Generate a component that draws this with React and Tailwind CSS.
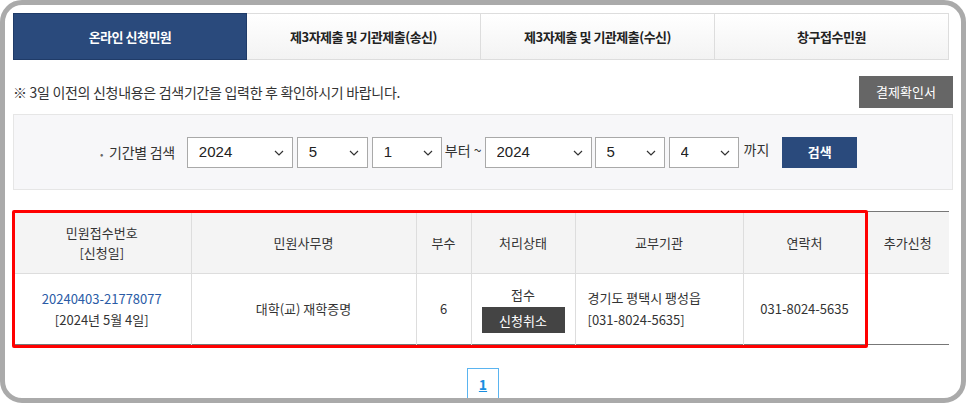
import React, { useState } from 'react'

const tabs = ['온라인 신청민원', '제3자제출 및 기관제출(송신)', '제3자제출 및 기관제출(수신)', '창구접수민원']

function Chevron(){
  return (
    <svg width="10" height="6" viewBox="0 0 10 6" className="pointer-events-none absolute right-[9px] top-[13px]">
      <path d="M1 1 L5 5 L9 1" fill="none" stroke="#333" strokeWidth="1.2" />
    </svg>
  )
}

function Select({ value, options, width }){
  const [v, setV] = useState(value)
  return (
    <div className={`relative ${width}`}>
      <select value={v} onChange={e=>setV(e.target.value)} className="h-[31px] w-full appearance-none border border-[#a9a9a9] bg-white pl-[11px] text-[15px] text-[#222] outline-none" style={{ fontFamily: '"Liberation Sans", Arial, sans-serif' }}>
        {options.map(o=> <option key={o} value={o}>{o}</option>)}
      </select>
      <Chevron />
    </div>
  )
}

const years = ['2022', '2023', '2024']
const months = Array.from({ length: 12 }, (_, i) => String(i + 1))
const days = Array.from({ length: 31 }, (_, i) => String(i + 1))

export default function App(){
  const [active, setActive] = useState(0)
  const cols = ['w-[178px]', 'w-[225px]', 'w-[55px]', 'w-[104px]', 'w-[168px]', 'w-[123px]', 'w-[83px]']

  return (
    <div className="h-[403px] w-[966px] bg-white" style={{ fontFamily: '"Noto Sans CJK KR", "Noto Sans", sans-serif' }}>
      <div className="h-full w-full overflow-hidden rounded-[22px] border-[5px] border-[#aaaaaa] px-[8px] pt-[8px]">
        {/* tabs */}
        <div className="flex h-[47px]">
          {tabs.map((t, i) => (
            <button key={t} onClick={()=>setActive(i)}
              className={`flex w-[234px] items-center justify-center text-[13px] font-bold tracking-[-0.5px] ${i === active ? 'border border-[#1f3b68] bg-[#2a4a7c] text-white' : 'border border-l-0 border-[#dddddd] bg-gradient-to-b from-white to-[#f3f3f3] text-[#222]'}`}>
              {t}
            </button>
          ))}
        </div>

        <div className="mt-[16px] flex h-[32px] items-center justify-between">
          <p className="text-[14px] tracking-[-0.3px] text-[#333]">※ 3일 이전의 신청내용은 검색기간을 입력한 후 확인하시기 바랍니다.</p>
          <button className="flex h-[32px] w-[94px] items-center justify-center bg-[#666666] text-[13px] text-white">결제확인서</button>
        </div>

        {/* period search */}
        <div className="mt-[6px] flex h-[76px] items-center border border-[#e6e6e6] bg-[#f7f7f9] pl-[86px] text-[14px] text-[#333]">
          <span className="mr-[12px] tracking-[-0.3px]"><span className="mr-[6px] text-[10px] text-[#666]">•</span>기간별 검색</span>
          <Select value="2024" options={years} width="w-[106px]" />
          <div className="w-[4px]" />
          <Select value="5" options={months} width="w-[71px]" />
          <div className="w-[4px]" />
          <Select value="1" options={days} width="w-[70px]" />
          <span className="mx-[3px] mb-[4px]">부터 ~</span>
          <Select value="2024" options={years} width="w-[107px]" />
          <div className="w-[3px]" />
          <Select value="5" options={months} width="w-[70px]" />
          <div className="w-[4px]" />
          <Select value="4" options={days} width="w-[70px]" />
          <span className="ml-[5px] mb-[6px]">까지</span>
          <button className="ml-[13px] h-[31px] w-[75px] bg-[#2a4a7c] text-[13px] font-bold text-white">검색</button>
        </div>

        {/* result table */}
        <div className="relative mt-[21px]">
          <table className="w-[936px] table-fixed border-collapse text-[13px] text-[#333]">
            <colgroup>{cols.map((c, i) => <col key={i} className={c} />)}</colgroup>
            <thead>
              <tr className="h-[62px] border-t border-[#777] bg-[#f4f4f4]">
                <th className="border-b border-r border-[#dddddd] font-normal leading-[20px]">민원접수번호<br />[신청일]</th>
                <th className="border-b border-r border-[#dddddd] font-normal">민원사무명</th>
                <th className="border-b border-r border-[#dddddd] font-normal">부수</th>
                <th className="border-b border-r border-[#dddddd] font-normal">처리상태</th>
                <th className="border-b border-r border-[#dddddd] font-normal">교부기관</th>
                <th className="border-b border-r border-[#dddddd] font-normal">연락처</th>
                <th className="border-b border-[#dddddd] font-normal">추가신청</th>
              </tr>
            </thead>
            <tbody>
              <tr className="h-[71px] border-b border-[#777]">
                <td className="border-r border-[#dddddd] text-center leading-[21px]">
                  <a href="#" className="text-[#2a5ba6]">20240403-21778077</a><br />[2024년 5월 4일]
                </td>
                <td className="border-r border-[#dddddd] text-center">대학(교) 재학증명</td>
                <td className="border-r border-[#dddddd] text-center">6</td>
                <td className="border-r border-[#dddddd] text-center">
                  <div className="flex flex-col items-center gap-[3px]">
                    <span>접수</span>
                    <button className="h-[26px] w-[83px] bg-[#444444] text-[13px] text-white">신청취소</button>
                  </div>
                </td>
                <td className="border-r border-[#dddddd] pl-[12px] leading-[22px]">경기도 평택시 팽성읍<br />[031-8024-5635]</td>
                <td className="border-r border-[#dddddd] text-center">031-8024-5635</td>
                <td></td>
              </tr>
            </tbody>
          </table>
          <div className="pointer-events-none absolute left-[-1px] top-[-1px] h-[138px] w-[856px] rounded-[2px] border-[3px] border-[#ff0000]" />
        </div>

        {/* pagination */}
        <div className="mt-[23px] flex justify-center">
          <a href="#" className="flex h-[32px] w-[32px] items-center justify-center border border-[#5ab4f0] text-[14px] font-bold text-[#1a8ee0] underline">1</a>
        </div>
      </div>
    </div>
  )
}
